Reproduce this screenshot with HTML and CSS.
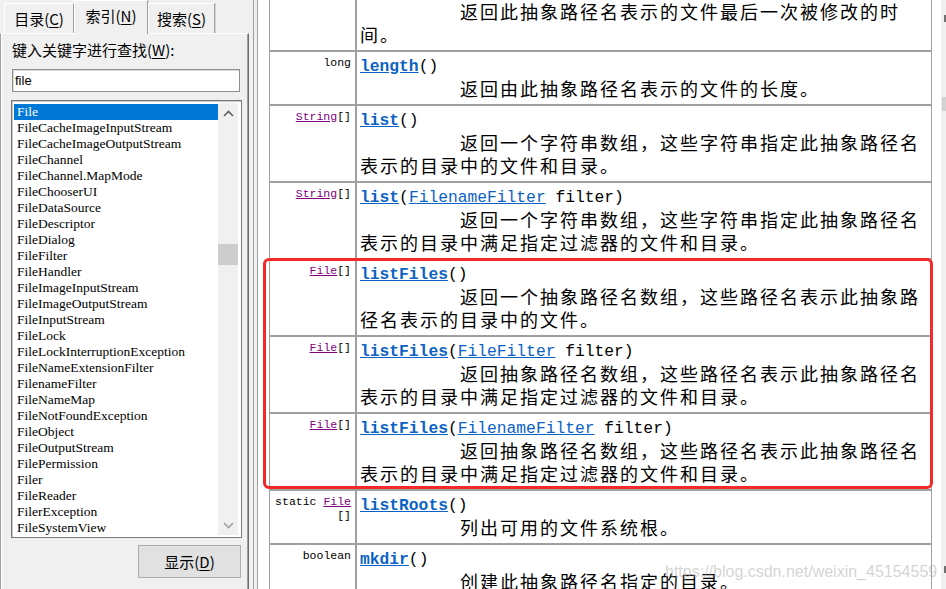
FILE: index.html
```html
<!DOCTYPE html>
<html lang="zh-CN">
<head>
<meta charset="utf-8">
<title>File - 索引</title>
<link rel="stylesheet" href="styles.css">
</head>
<body>
<div class="app">
  <aside class="nav">
    <div class="tabs">
      <div class="tab t1">目录(<u>C</u>)</div>
      <div class="tab t2 active">索引(<u>N</u>)</div>
      <div class="tab t3">搜索(<u>S</u>)</div>
    </div>
    <div class="panel">
      <div class="prompt">键入关键字进行查找(<u>W</u>):</div>
      <div class="field">file</div>
      <div class="listbox">
        <ul class="items">
          <li class="sel">File</li>
          <li>FileCacheImageInputStream</li>
          <li>FileCacheImageOutputStream</li>
          <li>FileChannel</li>
          <li>FileChannel.MapMode</li>
          <li>FileChooserUI</li>
          <li>FileDataSource</li>
          <li>FileDescriptor</li>
          <li>FileDialog</li>
          <li>FileFilter</li>
          <li>FileHandler</li>
          <li>FileImageInputStream</li>
          <li>FileImageOutputStream</li>
          <li>FileInputStream</li>
          <li>FileLock</li>
          <li>FileLockInterruptionException</li>
          <li>FileNameExtensionFilter</li>
          <li>FilenameFilter</li>
          <li>FileNameMap</li>
          <li>FileNotFoundException</li>
          <li>FileObject</li>
          <li>FileOutputStream</li>
          <li>FilePermission</li>
          <li>Filer</li>
          <li>FileReader</li>
          <li>FilerException</li>
          <li>FileSystemView</li>
        </ul>
        <div class="sbar">
          <span class="arrow"><svg width="11" height="7" viewBox="0 0 11 7"><polyline points="1,6 5.5,1.5 10,6" fill="none" stroke="#606060" stroke-width="1.6"/></svg></span>
          <span class="track-top"></span>
          <span class="thumb"></span>
          <span class="track-bottom"></span>
          <span class="arrow"><svg width="11" height="7" viewBox="0 0 11 7"><polyline points="1,1 5.5,5.5 10,1" fill="none" stroke="#a0a0a0" stroke-width="1.6"/></svg></span>
        </div>
      </div>
      <button class="btn">显示(<u>D</u>)</button>
    </div>
  </aside>
  <div class="splitter"></div>
  <main class="doc">
    <table class="summary">
      <tr>
        <td class="type">long</td>
        <td class="member"><div class="sig"><a class="m">lastModified</a>()</div><div class="desc">返回此抽象路径名表示的文件最后一次被修改的时间。</div></td>
      </tr>
      <tr>
        <td class="type">long</td>
        <td class="member"><div class="sig"><a class="m">length</a>()</div><div class="desc">返回由此抽象路径名表示的文件的长度。</div></td>
      </tr>
      <tr>
        <td class="type"><a class="t">String</a>[]</td>
        <td class="member"><div class="sig"><a class="m">list</a>()</div><div class="desc">返回一个字符串数组，这些字符串指定此抽象路径名表示的目录中的文件和目录。</div></td>
      </tr>
      <tr>
        <td class="type"><a class="t">String</a>[]</td>
        <td class="member"><div class="sig"><a class="m">list</a>(<a class="p">FilenameFilter</a> filter)</div><div class="desc">返回一个字符串数组，这些字符串指定此抽象路径名表示的目录中满足指定过滤器的文件和目录。</div></td>
      </tr>
      <tr>
        <td class="type"><a class="t">File</a>[]</td>
        <td class="member"><div class="sig"><a class="m">listFiles</a>()</div><div class="desc">返回一个抽象路径名数组，这些路径名表示此抽象路径名表示的目录中的文件。</div></td>
      </tr>
      <tr>
        <td class="type"><a class="t">File</a>[]</td>
        <td class="member"><div class="sig"><a class="m">listFiles</a>(<a class="p">FileFilter</a> filter)</div><div class="desc">返回抽象路径名数组，这些路径名表示此抽象路径名表示的目录中满足指定过滤器的文件和目录。</div></td>
      </tr>
      <tr>
        <td class="type"><a class="t">File</a>[]</td>
        <td class="member"><div class="sig"><a class="m">listFiles</a>(<a class="p">FilenameFilter</a> filter)</div><div class="desc">返回抽象路径名数组，这些路径名表示此抽象路径名表示的目录中满足指定过滤器的文件和目录。</div></td>
      </tr>
      <tr>
        <td class="type">static <a class="t">File</a><wbr>[]</td>
        <td class="member"><div class="sig"><a class="m">listRoots</a>()</div><div class="desc">列出可用的文件系统根。</div></td>
      </tr>
      <tr>
        <td class="type">boolean</td>
        <td class="member"><div class="sig"><a class="m">mkdir</a>()</div><div class="desc">创建此抽象路径名指定的目录。</div></td>
      </tr>
    </table>
  </main>
  <div class="vscroll">
    <span class="vs-arrow"></span>
    <span class="vs-thumb"></span>
    <span class="vs-fill"></span>
    <span class="vs-arrow"></span>
  </div>
</div>
<div class="highlight"></div>
<div class="watermark">https://blog.csdn.net/weixin_45154559</div>
</body>
</html>
```
FILE: styles.css
```css
html, body {
  margin: 0;
  padding: 0;
}
body {
  width: 946px;
  height: 589px;
  overflow: hidden;
  position: relative;
  background: #f0f0f0;
  font-family: "Noto Sans CJK SC", sans-serif;
}
u { text-decoration: underline; text-underline-offset: 2px; }

.app {
  display: flex;
  height: 589px;
}

/* ---------- left navigation ---------- */
.nav {
  width: 249px;
  flex: none;
  display: flex;
  flex-direction: column;
}
.tabs {
  height: 33px;
  flex: none;
  display: flex;
  align-items: flex-start;
  padding-left: 4px;
  position: relative;
  z-index: 2;
}
.tab {
  box-sizing: border-box;
  height: 30px;
  margin-top: 3px;
  padding-top: 5px;
  text-align: center;
  font-size: 15px;
  line-height: 20px;
  color: #000;
  background: #f0f0f0;
  border-top: 1px solid #fff;
  border-left: 1px solid #fff;
  border-right: 1px solid #a0a0a0;
  box-shadow: 1px 0 0 #d4d4d4;
}
.t1 { width: 70px; }
.t2 { width: 74px; }
.t3 { width: 67px; }
.tab.active {
  height: 34px;
  margin-top: 0;
}
.panel {
  flex: 1;
  box-sizing: border-box;
  border-top: 1px solid #fff;
  border-left: 1px solid #a0a0a0;
  border-right: 1px solid #6f6f6f;
  box-shadow: inset 1px 0 0 #fff, inset -1px 0 0 #a0a0a0;
  display: flex;
  flex-direction: column;
  align-items: flex-start;
  padding-left: 10px;
}
.prompt {
  margin-top: 6px;
  margin-left: 1px;
  font-size: 15px;
  line-height: 20px;
  color: #000;
}
.field {
  box-sizing: border-box;
  margin-top: 9px;
  margin-left: 1px;
  width: 228px;
  height: 23px;
  background: #fff;
  border: 1px solid #8d8d8d;
  box-shadow: inset 1px 1px 0 #dcdcdc;
  padding-left: 2px;
  font-family: "Liberation Sans", sans-serif;
  font-size: 13px;
  line-height: 21px;
}
.listbox {
  box-sizing: border-box;
  margin-top: 8px;
  width: 231px;
  height: 438px;
  background: #fff;
  border: 1px solid #7a7a7a;
  box-shadow: inset 1px 1px 0 #c8c8c8;
  padding: 2px 3px 2px 2px;
  display: flex;
}
.items {
  list-style: none;
  margin: 0;
  padding: 1px 0 0 0;
  width: 204px;
  flex: none;
  overflow: hidden;
  font-family: "Liberation Serif", serif;
  font-size: 13.5px;
  line-height: 16px;
  color: #000;
}
.items li {
  height: 16px;
  padding-left: 3px;
  white-space: nowrap;
}
.items li.sel {
  background: #0078d7;
  color: #fff;
}
.sbar {
  width: 20px;
  flex: none;
  background: #f0f0f0;
  display: flex;
  flex-direction: column;
}
.arrow {
  height: 20px;
  flex: none;
  display: flex;
  align-items: center;
  justify-content: center;
}
.track-top { height: 121px; flex: none; }
.thumb { height: 21px; flex: none; background: #cdcdcd; }
.track-bottom { flex: 1; }
.btn {
  box-sizing: border-box;
  margin: 7px 0 0 127px;
  width: 103px;
  height: 33px;
  padding: 0;
  background: #e1e1e1;
  border: 1px solid #adadad;
  font-family: "Noto Sans CJK SC", sans-serif;
  font-size: 15px;
  color: #000;
}

/* ---------- splitter ---------- */
.splitter {
  width: 8px;
  flex: none;
  background: linear-gradient(to right, #f0f0f0 0 4px, #a0a0a0 4px 5px, #f0f0f0 5px);
}

/* ---------- document ---------- */
.doc {
  flex: 1;
  background: #fff;
  border-left: 1px solid #a0a0a0;
  overflow: hidden;
}
.summary {
  border-collapse: separate;
  border-spacing: 0;
  table-layout: fixed;
  width: 663px;
  margin: -26px 0 0 11px;
}
.summary td {
  border: 1px solid #a0a0a0;
  vertical-align: top;
}
.type {
  box-sizing: border-box;
  width: 87px;
  padding: 4px 4px 4px 2px;
  text-align: right;
  font-family: "Liberation Mono", monospace;
  font-size: 11.5px;
  line-height: 14px;
  color: #000;
}
.member {
  padding: 4px 5px 4px 3px;
}
.sig {
  font-family: "Liberation Mono", monospace;
  font-size: 16.3px;
  line-height: 21px;
  white-space: nowrap;
  color: #000;
}
.desc {
  font-family: "Noto Sans CJK SC", sans-serif;
  font-size: 18px;
  line-height: 23px;
  letter-spacing: 2px;
  text-indent: 100px;
  color: #000;
}
.m {
  color: #0b62c4;
  font-weight: bold;
  text-decoration: underline;
}
.p {
  color: #0b62c4;
  text-decoration: underline;
}
.t {
  color: #800080;
  text-decoration: underline;
}

/* ---------- window scrollbar edge ---------- */
.vscroll {
  width: 5px;
  flex: none;
  background: #f0f0f0;
  display: flex;
  flex-direction: column;
  align-items: flex-end;
}
.vs-arrow {
  width: 2px;
  height: 7px;
  margin-top: 15px;
  background: #707070;
}
.vs-thumb {
  width: 4px;
  height: 14px;
  margin-top: 75px;
  background: #d2d2d2;
}
.vs-fill { flex: 1; }
.vscroll .vs-arrow:last-child {
  margin: 0 0 16px 0;
}

/* ---------- overlays ---------- */
.highlight {
  position: absolute;
  left: 263px;
  top: 258px;
  width: 670px;
  height: 231px;
  box-sizing: border-box;
  border: 3.5px solid #f42a2a;
  border-radius: 6px;
}
.watermark {
  position: absolute;
  left: 665px;
  top: 561px;
  font-family: "Liberation Sans", sans-serif;
  font-size: 16px;
  line-height: 22px;
  color: rgba(175, 175, 175, 0.55);
  white-space: nowrap;
}
```
